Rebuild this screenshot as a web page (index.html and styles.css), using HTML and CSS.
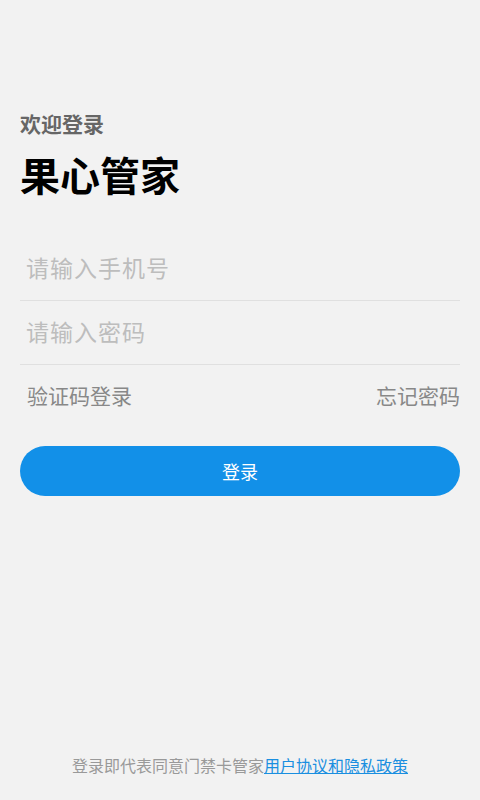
FILE: index.html
```html
<!DOCTYPE html>
<html>
  <head>
    <meta charset="utf-8">
    <title>果心管家</title>
    <link rel="stylesheet" href="styles.css">
  </head>
  <body>
    <div class="page">
      <div class="welcome">欢迎登录</div>
      <h1 class="brand">果心管家</h1>

      <form class="login">
        <input class="field" type="tel" placeholder="请输入手机号">
        <input class="field" type="password" placeholder="请输入密码">

        <div class="links">
          <a href="#">验证码登录</a>
          <a href="#">忘记密码</a>
        </div>

        <button class="submit" type="button">登录</button>
      </form>

      <p class="terms">
        登录即代表同意门禁卡管家<a href="#">用户协议和隐私政策</a>
      </p>
    </div>
  </body>
</html>
```

FILE: styles.css
```css
*,
*:before,
*:after {
  box-sizing: border-box;
}

html,
body {
  margin: 0;
  padding: 0;
  background: #f2f2f2;
  font-family: "Noto Sans CJK SC", "Noto Sans", sans-serif;
}

.page {
  display: flex;
  flex-direction: column;
  min-height: 100vh;
  padding: 109px 20px 23px;
}

.welcome {
  font-size: 21px;
  line-height: 28px;
  font-weight: bold;
  color: #666;
}

.brand {
  margin: 12px 0 0;
  font-size: 40px;
  line-height: 50px;
  font-weight: bold;
  color: #000;
}

.login {
  display: flex;
  flex-direction: column;
  margin-top: 38px;
}

.field {
  height: 64px;
  padding: 0 6px 3px;
  border: 0;
  border-bottom: 1px solid #e0e0e0;
  background: transparent;
  font-family: inherit;
  font-size: 23px;
  letter-spacing: 1px;
  color: #333;
  outline: none;
}

.field::placeholder {
  color: #bdbdbd;
}

.links {
  display: flex;
  justify-content: space-between;
  align-items: center;
  height: 62px;
  padding: 0 0 3px 7px;
}

.links a {
  font-size: 21px;
  color: #888;
  text-decoration: none;
}

.submit {
  height: 50px;
  margin-top: 19px;
  padding-bottom: 2px;
  border: 0;
  border-radius: 25px;
  background: #1290e8;
  color: #fff;
  font-family: inherit;
  font-size: 18px;
}

.terms {
  margin: auto 0 0;
  font-size: 16px;
  line-height: 24px;
  color: #999;
  text-align: center;
}

.terms a {
  color: #1a8fe0;
  text-decoration: underline;
}
```
